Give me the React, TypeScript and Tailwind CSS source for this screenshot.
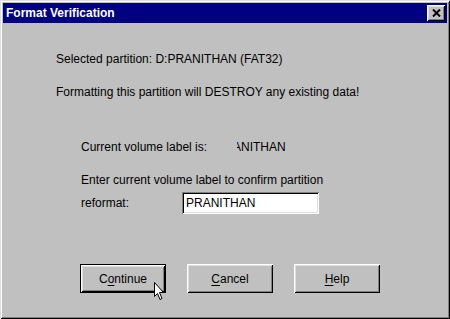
import React from "react"

const raised =
  "shadow-[inset_1px_1px_#ffffff,inset_-1px_-1px_#000000,inset_2px_2px_#dfdfdf,inset_-2px_-2px_#808080]"

function Btn({ children, isDefault = false }: { children: React.ReactNode; isDefault?: boolean }) {
  return (
    <div
      className={`flex h-[29px] w-[86px] items-center justify-center bg-[#c0c0c0] text-[12px] text-black ${
        isDefault ? "border border-black" : ""
      } ${raised}`}
    >
      {children}
    </div>
  )
}

export default function App() {
  return (
    <div className="relative flex h-[319px] w-[450px] flex-col bg-[#c0c0c0] p-[3px] font-['Liberation_Sans',Arial,sans-serif] text-black shadow-[inset_1px_1px_#dfdfdf,inset_-1px_-1px_#000000,inset_2px_2px_#ffffff,inset_-2px_-2px_#808080]">
      {/* Title bar */}
      <div className="flex h-[20px] items-center justify-between bg-[#000080] pl-[3px] pr-[2px]">
        <span className="text-[12px] font-bold leading-[14px] text-white">Format Verification</span>
        <div className={`flex h-[16px] w-[18px] items-center justify-center bg-[#c0c0c0] ${raised}`}>
          <svg width="9" height="8" viewBox="0 0 9 8">
            <path d="M1 0.5 L8 7.5 M8 0.5 L1 7.5" stroke="#000" strokeWidth="2" />
          </svg>
        </div>
      </div>

      {/* Body */}
      <div className="flex flex-col pl-[53px] text-[12px] leading-[14px]">
        <p className="mt-[29px]">Selected partition: D:PRANITHAN (FAT32)</p>
        <p className="mt-[19px]">Formatting this partition will DESTROY any existing data!</p>

        <div className="mt-[41px] flex pl-[25px]">
          <span className="w-[156px]">Current volume label is:</span>
          <span className="overflow-hidden">
            <span className="ml-[-4px] block">ANITHAN</span>
          </span>
        </div>
        <p className="mt-[19px] pl-[25px]">Enter current volume label to confirm partition</p>
        <div className="mt-[5px] flex items-center pl-[25px]">
          <span className="w-[101px]">reformat:</span>
          <div className="flex h-[22px] w-[137px] items-center bg-white pl-[4px] shadow-[inset_1px_1px_#808080,inset_-1px_-1px_#ffffff,inset_2px_2px_#000000,inset_-2px_-2px_#dfdfdf]">
            PRANITHAN
          </div>
        </div>

        <div className="ml-[24px] mt-[50px] flex gap-[21px]">
          <Btn isDefault>
            <span>
              C<span className="underline underline-offset-2">o</span>ntinue
            </span>
          </Btn>
          <Btn>
            <span>
              <span className="underline underline-offset-2">C</span>ancel
            </span>
          </Btn>
          <Btn>
            <span>
              <span className="underline underline-offset-2">H</span>elp
            </span>
          </Btn>
        </div>
      </div>

      {/* Mouse pointer */}
      <svg
        className="absolute left-[154px] top-[282px]"
        width="12"
        height="19"
        viewBox="0 0 12 19"
      >
        <path
          d="M0.5 0.5 L0.5 14.5 L3.5 11.5 L6 17.5 L8 16.5 L5.5 10.5 L9.5 10.5 Z"
          fill="#fff"
          stroke="#000"
          strokeWidth="1"
        />
      </svg>
    </div>
  )
}
